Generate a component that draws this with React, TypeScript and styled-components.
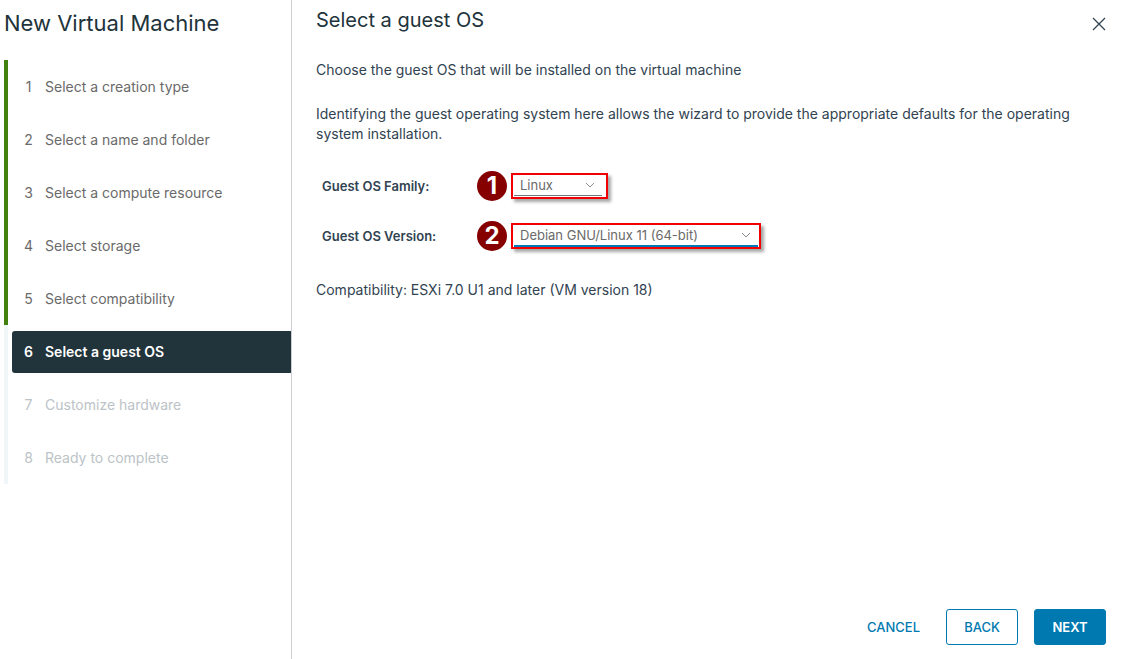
import React from "react";
import styled, { createGlobalStyle } from "styled-components";

const GlobalStyle = createGlobalStyle`
  *, *::before, *::after { box-sizing: border-box; }
  body {
    margin: 0;
    background: #fff;
    color: #314351;
    font-family: Inter, "Open Sans", sans-serif;
    font-size: 14px;
    line-height: 20px;
  }
`;

type StepState = "done" | "current" | "pending";

const Wizard = styled.div`
  display: flex;
  min-height: 100vh;
`;

const Sidebar = styled.aside`
  flex: 0 0 292px;
  padding: 8px 0 0 4px;
  border-right: 1px solid #cbcfd2;
`;

const WizardTitle = styled.h1`
  margin: 0 0 22px;
  color: #21333b;
  font-size: 22px;
  font-weight: 400;
  line-height: 30px;
`;

const StepList = styled.ol`
  margin: 0;
  padding: 0;
  list-style: none;
`;

const StepItem = styled.li<{ $state: StepState }>`
  display: flex;
  align-items: center;
  height: 53px;
  padding-left: 4px;
  border-left: 4px solid ${(p) => (p.$state === "done" ? "#42810e" : "#f1f6f8")};
`;

const stepColors: Record<StepState, string> = {
  done: "#6a6a6a",
  current: "#fff",
  pending: "#bcc3c7",
};

const StepButton = styled.button<{ $state: StepState }>`
  display: flex;
  align-items: center;
  gap: 12px;
  width: 100%;
  height: 42px;
  padding: 0 12px;
  border: 0;
  border-radius: 3px 0 0 3px;
  background: ${(p) => (p.$state === "current" ? "#21333b" : "transparent")};
  color: ${(p) => stepColors[p.$state]};
  font: inherit;
  font-weight: ${(p) => (p.$state === "current" ? 600 : 400)};
  text-align: left;
`;

const StepNumber = styled.span`
  width: 9px;
  text-align: center;
`;

const Content = styled.main`
  display: flex;
  flex: 1;
  flex-direction: column;
  min-width: 0;
  padding: 8px 17px 14px 24px;
`;

const Header = styled.header`
  display: flex;
  align-items: flex-start;
  justify-content: space-between;
  height: 52px;
`;

const PageTitle = styled.h2`
  margin: 0;
  color: #21333b;
  font-size: 20px;
  font-weight: 400;
  line-height: 24px;
`;

const CloseButton = styled.button`
  display: flex;
  margin-top: 9px;
  padding: 0;
  border: 0;
  background: none;
  color: #314351;
`;

const Paragraph = styled.p`
  margin: 0 0 24px;
`;

const Form = styled.form`
  display: grid;
  gap: 20px;
  padding: 3px 6px 0;
`;

const Field = styled.div`
  display: flex;
  align-items: center;
  height: 30px;
`;

const FieldLabel = styled.label`
  width: 155px;
  font-size: 13px;
  font-weight: 600;
`;

const Badge = styled.span`
  display: flex;
  align-items: center;
  justify-content: center;
  width: 30px;
  height: 30px;
  margin-right: 4px;
  border-radius: 50%;
  background: #860000;
  color: #fff;
  font-size: 24px;
  font-weight: 700;
`;

const Highlight = styled.div<{ $snug?: boolean }>`
  padding: ${(p) => (p.$snug ? "0 1px 0 1px" : "0 4px 1px 1px")};
  border: 2px solid #f00000;
  box-shadow: 3px 3px 3px rgba(0, 0, 0, 0.35);
`;

const SelectBox = styled.div<{ $width: number; $active?: boolean }>`
  display: flex;
  align-items: center;
  position: relative;
  width: ${(p) => p.$width}px;
  border-bottom: ${(p) => (p.$active ? "2px solid #0079b8" : "1px solid #6f7a80")};

  svg {
    position: absolute;
    right: 7px;
    pointer-events: none;
  }
`;

const Select = styled.select`
  width: 100%;
  height: 20px;
  padding: 0 24px 0 6px;
  border: 0;
  outline: 0;
  appearance: none;
  background: transparent;
  color: #6a6a6a;
  font: inherit;
  font-size: 13px;
`;

const Compatibility = styled.p`
  margin: 29px 0 0;
`;

const Footer = styled.footer`
  display: flex;
  justify-content: flex-end;
  gap: 16px;
  margin-top: auto;
`;

const ActionButton = styled.button<{ $kind: "link" | "outline" | "solid" }>`
  min-width: 72px;
  height: 36px;
  padding: 0 9px;
  border: 1px solid ${(p) => (p.$kind === "link" ? "transparent" : "#0079b0")};
  border-radius: 3px;
  background: ${(p) => (p.$kind === "solid" ? "#0079b0" : "transparent")};
  color: ${(p) => (p.$kind === "solid" ? "#fff" : "#0079b0")};
  font: inherit;
  font-size: 13px;
  font-weight: ${(p) => (p.$kind === "solid" ? 600 : 500)};
`;

const steps: { label: string; state: StepState }[] = [
  { label: "Select a creation type", state: "done" },
  { label: "Select a name and folder", state: "done" },
  { label: "Select a compute resource", state: "done" },
  { label: "Select storage", state: "done" },
  { label: "Select compatibility", state: "done" },
  { label: "Select a guest OS", state: "current" },
  { label: "Customize hardware", state: "pending" },
  { label: "Ready to complete", state: "pending" },
];

const fields = [
  { id: "os-family", label: "Guest OS Family:", value: "Linux", width: 88, active: false },
  {
    id: "os-version",
    label: "Guest OS Version:",
    value: "Debian GNU/Linux 11 (64-bit)",
    width: 244,
    active: true,
  },
];

const Chevron = () => (
  <svg width="10" height="6" viewBox="0 0 10 6" fill="none" stroke="#8c8c8c" aria-hidden="true">
    <path d="M1 1l4 4 4-4" />
  </svg>
);

export default function App() {
  return (
    <>
      <GlobalStyle />
      <Wizard>
        <Sidebar>
          <WizardTitle>New Virtual Machine</WizardTitle>
          <nav>
            <StepList>
              {steps.map((step, i) => (
                <StepItem key={step.label} $state={step.state}>
                  <StepButton
                    type="button"
                    $state={step.state}
                    disabled={step.state === "pending"}
                    aria-current={step.state === "current" ? "step" : undefined}
                  >
                    <StepNumber>{i + 1}</StepNumber>
                    {step.label}
                  </StepButton>
                </StepItem>
              ))}
            </StepList>
          </nav>
        </Sidebar>
        <Content>
          <Header>
            <PageTitle>Select a guest OS</PageTitle>
            <CloseButton type="button" aria-label="Close">
              <svg width="14" height="14" viewBox="0 0 14 14" stroke="currentColor" strokeWidth="1.3">
                <path d="M1 1l12 12M13 1L1 13" />
              </svg>
            </CloseButton>
          </Header>
          <Paragraph>Choose the guest OS that will be installed on the virtual machine</Paragraph>
          <Paragraph>
            Identifying the guest operating system here allows the wizard to provide the appropriate
            defaults for the operating system installation.
          </Paragraph>
          <Form>
            {fields.map((field, i) => (
              <Field key={field.id}>
                <FieldLabel htmlFor={field.id}>{field.label}</FieldLabel>
                <Badge>{i + 1}</Badge>
                <Highlight $snug={field.active}>
                  <SelectBox $width={field.width} $active={field.active}>
                    <Select id={field.id} defaultValue={field.value}>
                      <option>{field.value}</option>
                    </Select>
                    <Chevron />
                  </SelectBox>
                </Highlight>
              </Field>
            ))}
          </Form>
          <Compatibility>Compatibility: ESXi 7.0 U1 and later (VM version 18)</Compatibility>
          <Footer>
            <ActionButton type="button" $kind="link">CANCEL</ActionButton>
            <ActionButton type="button" $kind="outline">BACK</ActionButton>
            <ActionButton type="button" $kind="solid">NEXT</ActionButton>
          </Footer>
        </Content>
      </Wizard>
    </>
  );
}
